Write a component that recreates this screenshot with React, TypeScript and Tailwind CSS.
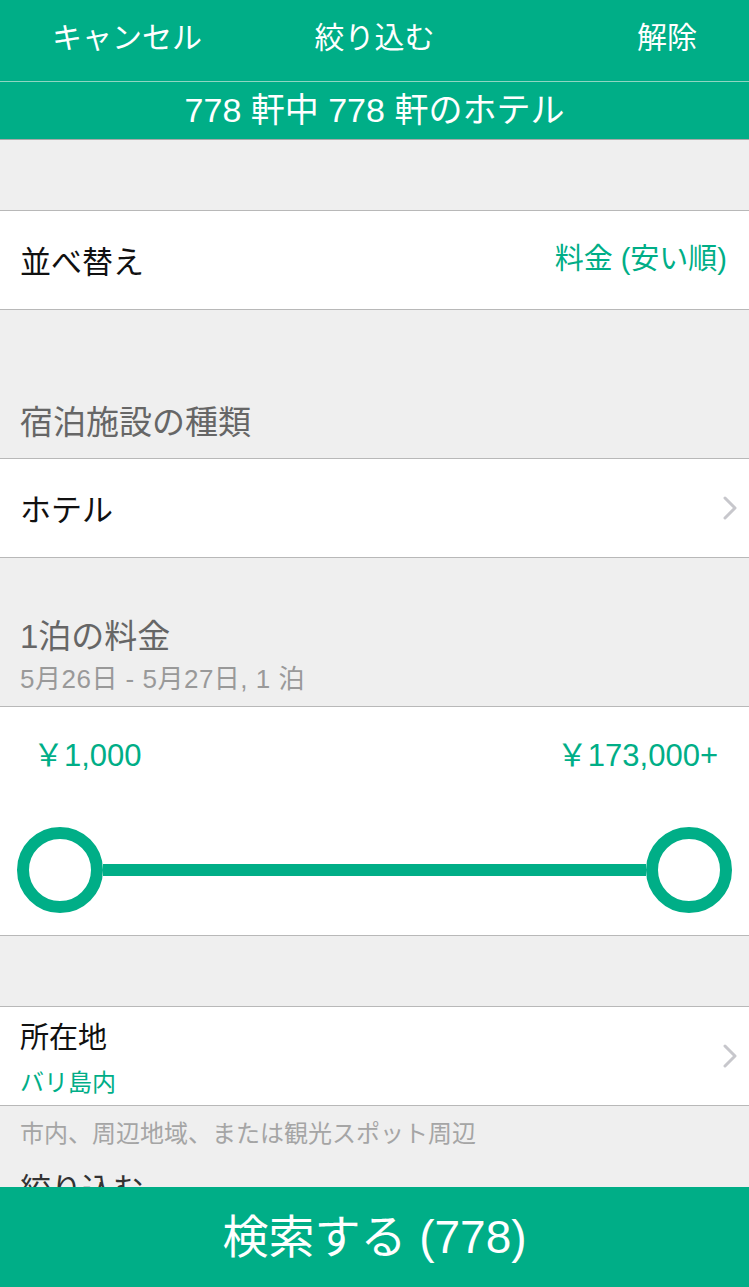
const green = "text-[#00ae87]"
const latin = "font-['Liberation_Sans','Noto_Sans_CJK_JP',sans-serif]"

function Chevron() {
  return (
    <svg width="14" height="24" viewBox="0 0 14 24" fill="none">
      <path d="M2 2l10 10-10 10" stroke="#c7c7cc" strokeWidth="3" strokeLinecap="round" strokeLinejoin="round" />
    </svg>
  )
}

function Knob() {
  return <div className="w-[86px] h-[86px] rounded-full border-[12px] border-[#00ae87] bg-white shrink-0" />
}

export default function App() {
  return (
    <div className="w-[749px] h-[1287px] flex flex-col overflow-hidden bg-[#efefef] font-['Noto_Sans_CJK_JP',sans-serif]">
      {/* header */}
      <div className="bg-[#00ae87] text-white">
        <div className="grid grid-cols-3 items-center h-[81px] pb-[10px] text-[30px]">
          <div className="pl-[52px]">キャンセル</div>
          <div className="text-center">絞り込む</div>
          <div className="text-right pr-[52px]">解除</div>
        </div>
        <div className="h-px bg-[#8fd6c2]" />
        <div className={`h-[58px] flex items-center justify-center text-[34px] border-b border-[#a9a9a9] ${latin}`}>
          778 軒中 778 軒のホテル
        </div>
      </div>

      <div className="flex-1 overflow-hidden">
        <div className="h-[70px]" />
        <div className="h-[100px] bg-white border-y border-[#b8b8b8] flex items-center justify-between pl-[20px] pr-[22px]">
          <span className="text-[31px] text-[#111]">並べ替え</span>
          <span className={`text-[29px] ${green} ${latin}`}>料金 (安い順)</span>
        </div>

        <div className="h-[148px] flex items-end pl-[20px] pb-[13px]">
          <span className="text-[33px] text-[#666]">宿泊施設の種類</span>
        </div>
        <div className="h-[100px] bg-white border-y border-[#b8b8b8] flex items-center justify-between pl-[20px] pr-[12px]">
          <span className="text-[31px] text-[#111]">ホテル</span>
          <Chevron />
        </div>

        <div className="h-[148px] flex flex-col justify-end pl-[20px] pb-[7px]">
          <span className={`text-[33px] text-[#666] leading-[44px] ${latin}`}>1泊の料金</span>
          <span className={`text-[26px] text-[#999] leading-[40px] tracking-[0.5px] ${latin}`}>5月26日 - 5月27日, 1 泊</span>
        </div>
        <div className="h-[230px] bg-white border-y border-[#b8b8b8] flex flex-col">
          <div className={`flex justify-between pl-[33px] pr-[31px] pt-[26px] text-[31px] ${green} ${latin}`}>
            <span>￥1,000</span>
            <span>￥173,000+</span>
          </div>
          <div className="flex items-center px-[17px] mt-[47px]">
            <Knob />
            <div className="flex-1 h-[12px] bg-[#00ae87]" />
            <Knob />
          </div>
        </div>

        <div className="h-[70px]" />
        <div className="h-[100px] bg-white border-y border-[#b8b8b8] flex justify-between pl-[20px] pr-[12px]">
          <div className="flex flex-col pt-[8px]">
            <span className="text-[29px] text-[#111] leading-[40px]">所在地</span>
            <span className={`text-[24px] leading-[32px] mt-[10px] ${green}`}>バリ島内</span>
          </div>
          <div className="self-center">
            <Chevron />
          </div>
        </div>
        <div className="pl-[20px] pt-[8px] text-[24px] text-[#a5a5a5]">市内、周辺地域、または観光スポット周辺</div>
        <div className="pl-[20px] pt-[14px] text-[31px] text-[#333]">絞り込む</div>
      </div>

      {/* bottom button */}
      <div className={`h-[100px] shrink-0 bg-[#00ae87] flex items-center justify-center text-white text-[46px] ${latin}`}>
        検索する (778)
      </div>
    </div>
  )
}
